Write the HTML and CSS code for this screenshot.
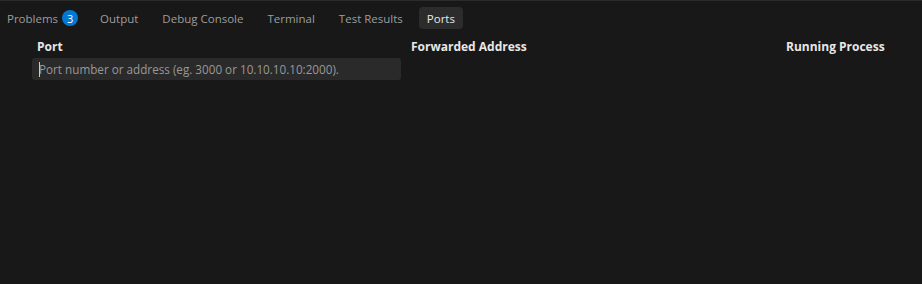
FILE: index.html
```html
<!DOCTYPE html>
<html>
<head>
<meta charset="utf-8">
<link rel="stylesheet" href="styles.css">
</head>
<body>
<div class="panel">
  <div class="tabs">
    <div class="tab first">Problems <span class="badge">3</span></div>
    <div class="tab">Output</div>
    <div class="tab">Debug Console</div>
    <div class="tab">Terminal</div>
    <div class="tab">Test Results</div>
    <div class="tab active">Ports</div>
  </div>
  <div class="table">
    <div class="head">
      <div class="col c1">Port</div>
      <div class="col c2">Forwarded Address</div>
      <div class="col c3">Running Process</div>
    </div>
    <div class="row">
      <div class="input"><span class="caret"></span><span class="ph">Port number or address (eg. 3000 or 10.10.10.10:2000).</span></div>
    </div>
  </div>
</div>
</body>
</html>
```
FILE: styles.css
```css
html, body { margin: 0; padding: 0; background: #181818; }
body { font-family: "Open Sans", "Noto Sans", sans-serif; font-size: 12px; color: #cccccc; }
.panel { width: 922px; height: 284px; border-top: 1px solid #2b2b2b; box-sizing: border-box; }
.tabs { display: flex; align-items: center; height: 33px; box-sizing: border-box; padding-top: 1px; }
.tab { display: flex; align-items: center; height: 22px; padding: 0 8px; margin-right: 8px; color: #9d9d9d; border-radius: 4px; white-space: nowrap; font-size: 11.5px; }
.tab.first { margin-left: -1px; margin-right: 6px; }
.tab.active { background: #2c2c2c; color: #e7e7e7; }
.badge { display: inline-flex; align-items: center; justify-content: center; width: 16px; height: 16px; border-radius: 50%; background: #0078d4; color: #ffffff; font-size: 11px; margin-left: 4px; }
.table { padding-left: 32px; }
.head { display: flex; height: 24px; align-items: center; font-weight: 700; color: #e7e7e7; }
.col.c1 { width: 374px; padding-left: 5px; }
.col.c2 { width: 375px; }
.row { height: 24px; display: flex; align-items: flex-start; }
.input { width: 369px; height: 22px; background: #2a2a2a; border-radius: 3px; display: flex; align-items: center; padding-left: 7px; box-sizing: border-box; color: #989898; }
.caret { width: 1px; height: 15px; background: #cccccc; margin-right: -1px; }
.ph { white-space: nowrap; font-size: 11.7px; }
```
